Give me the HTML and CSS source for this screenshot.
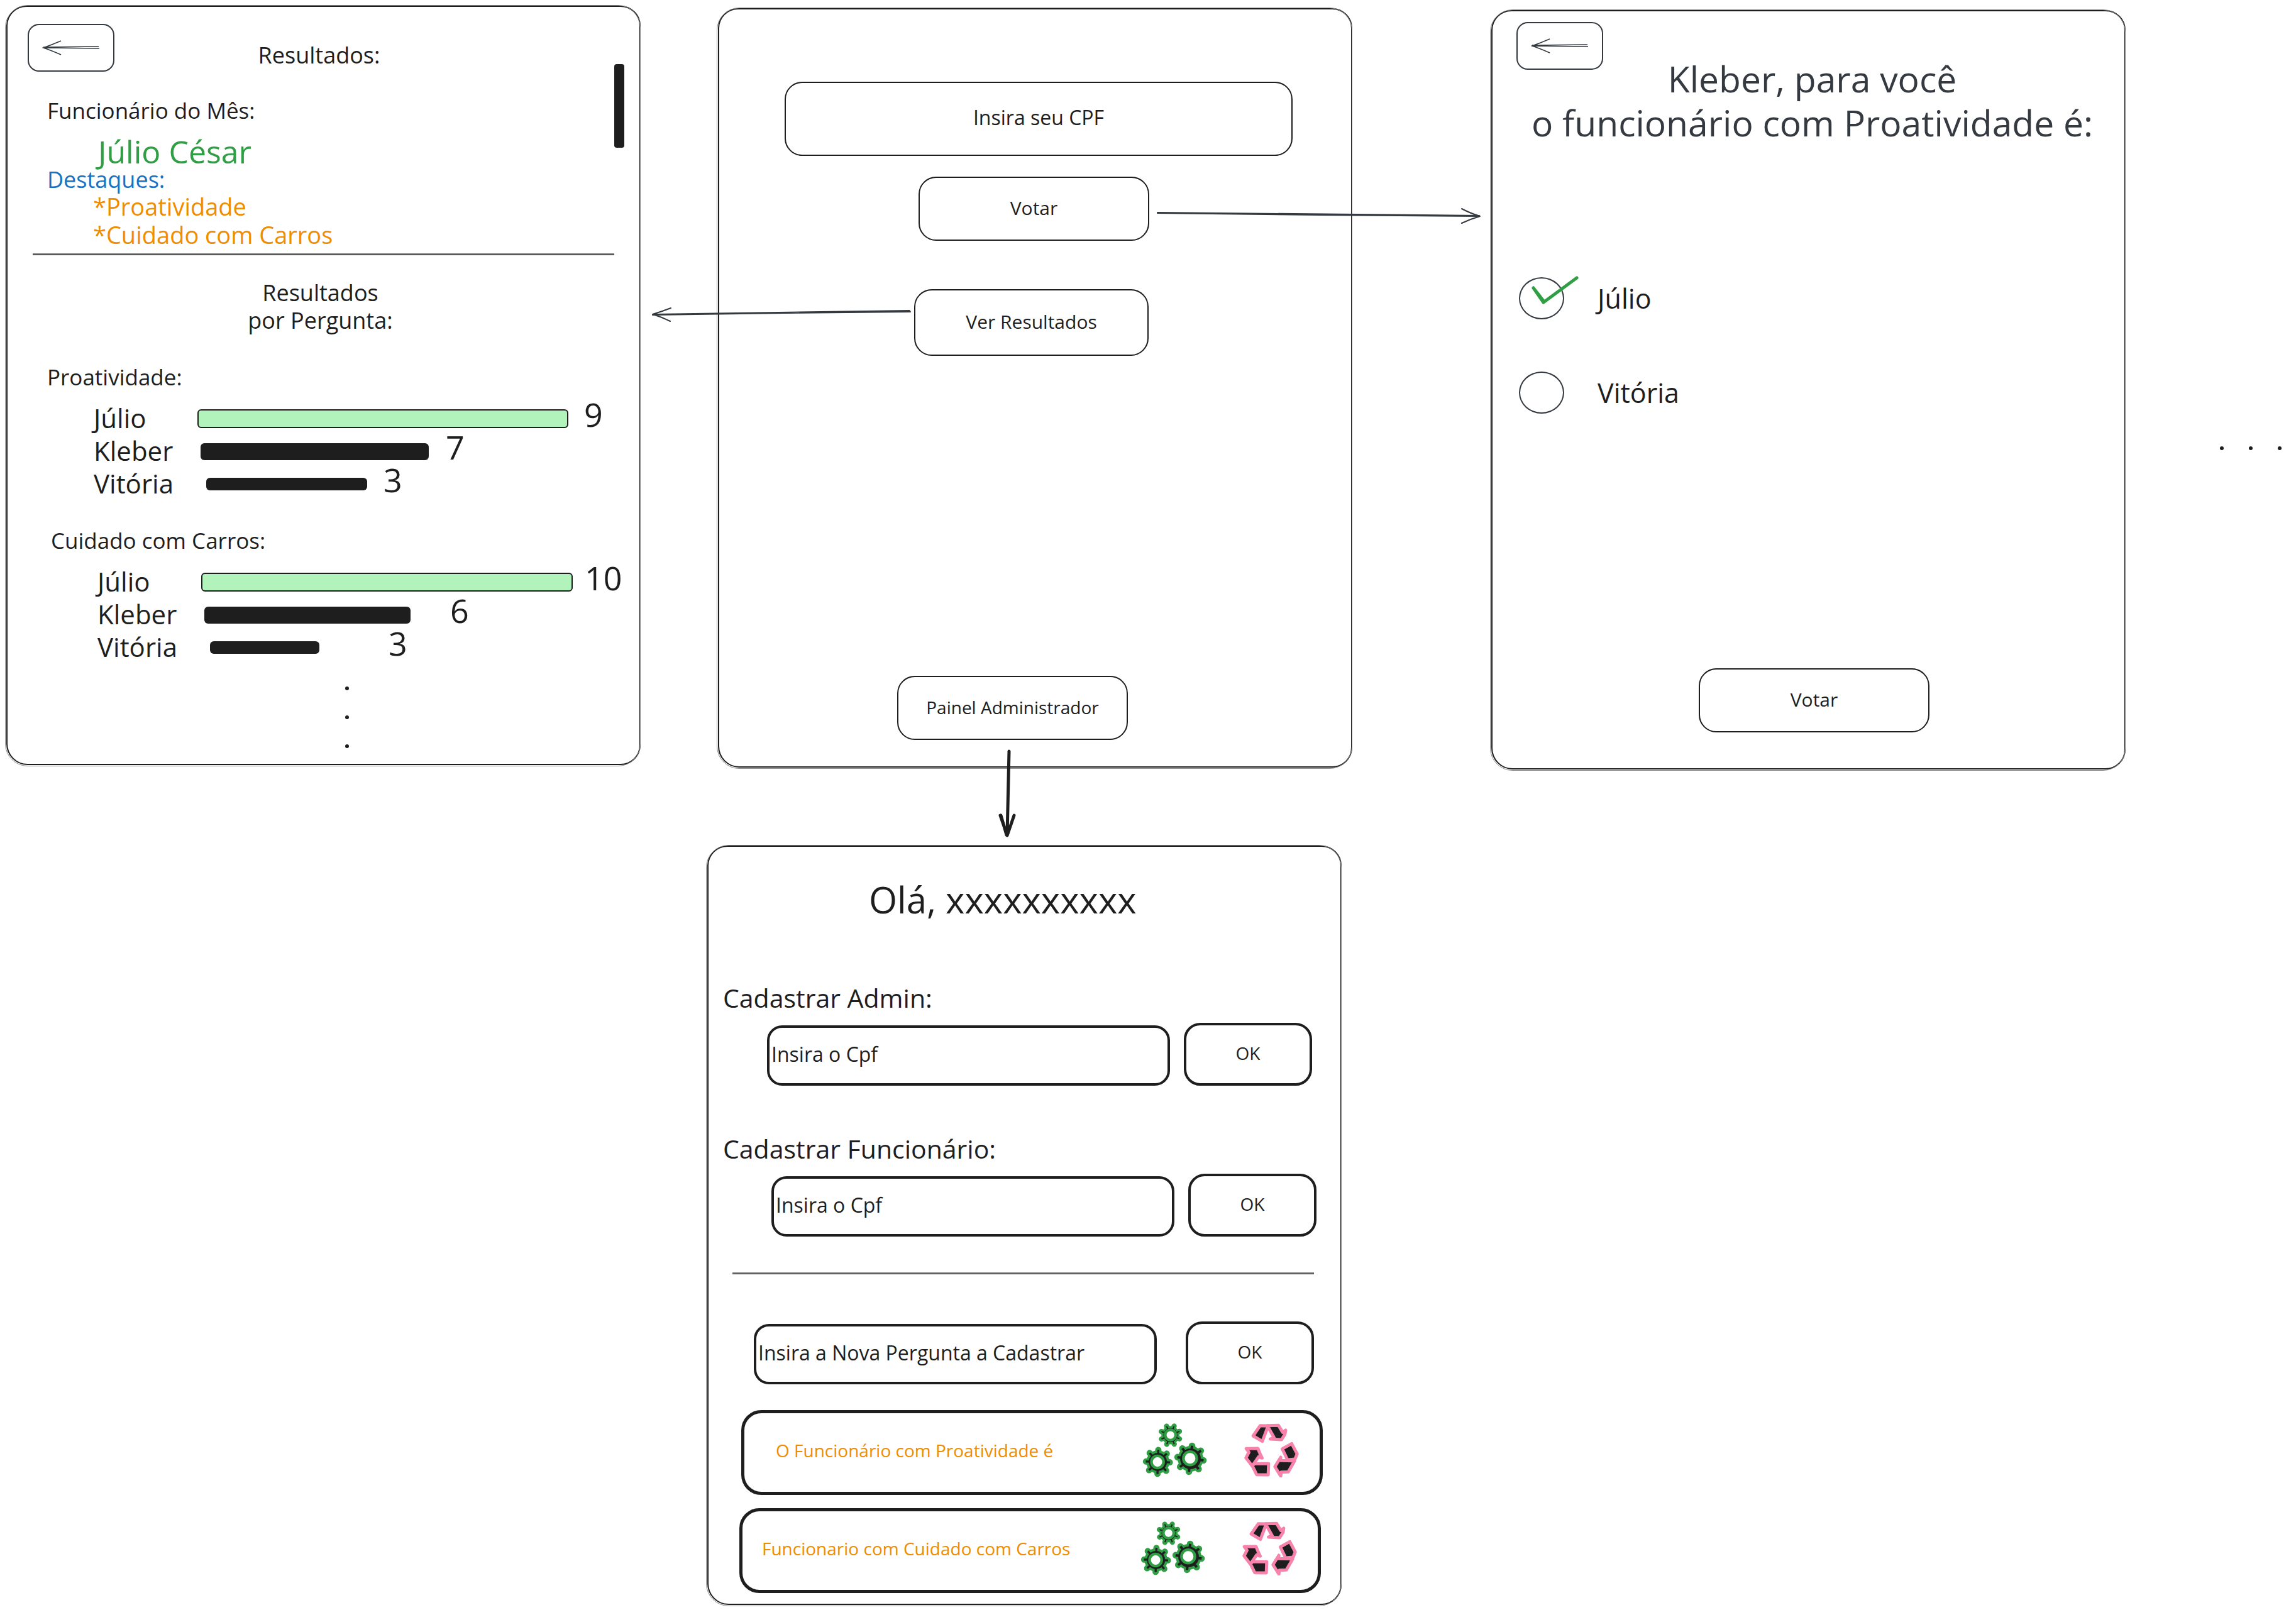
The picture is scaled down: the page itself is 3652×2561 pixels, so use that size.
FILE: index.html
```html
<!DOCTYPE html>
<html lang="pt-BR">
<head>
<meta charset="utf-8">
<meta name="viewport" content="width=device-width, initial-scale=1">
<title>Funcionário do Mês</title>
<link rel="stylesheet" href="styles.css">
</head>
<body>
<svg class="defs" aria-hidden="true">
  <symbol id="back" viewBox="0 0 92 26">
    <path d="M2 12 L90 11 M2 13 L91 14 M30 2 Q16 8 2 13 Q14 17 30 24"/>
  </symbol>
  <symbol id="gears" viewBox="50 64 312 268">
    <g class="gear-edge">
      <g transform="translate(184 127) rotate(22)"><circle r="43"/><path stroke-width="25" d="M0 -47V47M-47 0H47M-33 -33L33 33M-33 33L33 -33"/></g>
      <g transform="translate(124 255) rotate(2)"><circle r="55"/><path stroke-width="30" d="M0 -57V57M-57 0H57M-41 -41L41 41M-41 41L41 -41"/></g>
      <g transform="translate(280 240) rotate(7)"><circle r="61"/><path stroke-width="32" d="M0 -62V62M-62 0H62M-44 -44L44 44M-44 44L44 -44"/></g>
    </g>
    <g class="gear-body">
      <g transform="translate(184 127) rotate(22)"><circle r="33"/><path stroke-width="6" d="M0 -46V46M-46 0H46M-33 -33L33 33M-33 33L33 -33"/></g>
      <g transform="translate(124 255) rotate(2)"><circle r="43"/><path stroke-width="10" d="M0 -58V58M-58 0H58M-41 -41L41 41M-41 41L41 -41"/></g>
      <g transform="translate(280 240) rotate(7)"><circle r="49"/><path stroke-width="12" d="M0 -63V63M-63 0H63M-45 -45L45 45M-45 45L45 -45"/></g>
    </g>
    <g class="gear-hole">
      <circle cx="184" cy="126" r="25"/>
      <circle cx="122" cy="255" r="29"/>
      <circle cx="278" cy="238" r="32"/>
    </g>
  </symbol>
  <symbol id="recycle" viewBox="538 68 260 258">
    <path d="M614 79 L652 80 L624 154 L580 128 Z"/>
    <path d="M648 79 L701 78 L721 111 L735 101 L732 120 L716 146 L662 143 L680 136 Z"/>
    <path d="M547 189 L603 188 L613 213 L623 234 L606 228 L576 272 L546 233 L560 206 Z"/>
    <path d="M576 270 L588 261 L654 261 L652 314 L597 313 Z"/>
    <path d="M719 190 L764 165 L790 214 L780 239 L744 242 Z"/>
    <path d="M712 230 L710 246 L778 247 L748 300 L714 301 L712 320 L684 275 Z"/>
  </symbol>
</svg>

<main class="canvas">

  <section class="screen screen--results">
    <header class="results-head">
      <button class="back" type="button" aria-label="Voltar"><svg><use href="#back"/></svg></button>
      <h1 class="text results-title">Resultados:</h1>
    </header>
    <div class="scroll-thumb"></div>
    <h2 class="text text--label indent month">Funcionário do Mês:</h2>
    <p class="winner">Júlio César</p>
    <h3 class="text indent highlight-title">Destaques:</h3>
    <ul class="highlights">
      <li>*Proatividade</li>
      <li>*Cuidado com Carros</li>
    </ul>
    <hr class="rule rule--results">
    <h2 class="text by-question">Resultados<br>por Pergunta:</h2>

    <section class="chart">
      <h3 class="text text--label indent">Proatividade:</h3>
      <ul class="rows">
        <li class="row"><span class="name">Júlio</span><span class="track" style="width:615px"><span class="bar bar--first" style="width:590px"></span></span><span class="value">9</span></li>
        <li class="row"><span class="name">Kleber</span><span class="track" style="width:390px"><span class="bar" style="width:363px"></span></span><span class="value">7</span></li>
        <li class="row"><span class="name">Vitória</span><span class="track" style="width:282px"><span class="bar bar--thin" style="width:256px"></span></span><span class="value">3</span></li>
      </ul>
    </section>
    <section class="chart chart--inset">
      <h3 class="text text--label indent">Cuidado com Carros:</h3>
      <ul class="rows">
        <li class="row"><span class="name">Júlio</span><span class="track" style="width:610px"><span class="bar bar--first" style="width:591px"></span></span><span class="value">10</span></li>
        <li class="row"><span class="name">Kleber</span><span class="track" style="width:391px"><span class="bar" style="width:328px"></span></span><span class="value">6</span></li>
        <li class="row"><span class="name">Vitória</span><span class="track" style="width:284px"><span class="bar bar--thin" style="width:174px"></span></span><span class="value">3</span></li>
      </ul>
    </section>
    <div class="dots dots--column"><i></i><i></i><i></i></div>
  </section>

  <section class="screen screen--home">
    <input class="cpf" type="text" placeholder="Insira seu CPF" aria-label="Insira seu CPF">
    <button class="button button--vote" type="button">Votar</button>
    <button class="button button--see" type="button">Ver Resultados</button>
    <button class="button button--panel" type="button">Painel Administrador</button>
  </section>

  <section class="screen screen--vote">
    <button class="back" type="button" aria-label="Voltar"><svg><use href="#back"/></svg></button>
    <h1 class="question">Kleber, para você<br>o funcionário com Proatividade é:</h1>
    <div class="options">
      <label class="option">
        <input type="radio" name="voto" checked>
        <svg class="check" viewBox="0 0 76 48"><path d="M4 20 L20 43 L73 4 M4 20 Q13 31 21 42"/></svg>
        Júlio
      </label>
      <label class="option"><input type="radio" name="voto">Vitória</label>
    </div>
    <button class="button button--send" type="button">Votar</button>
  </section>

  <section class="screen screen--admin">
    <h1 class="hello">Olá, xxxxxxxxxx</h1>
    <label class="field-label" for="admin">Cadastrar Admin:</label>
    <div class="field field--admin">
      <input class="entry" id="admin" type="text" placeholder="Insira o Cpf">
      <button class="ok" type="button">OK</button>
    </div>
    <label class="field-label field-label--second" for="employee">Cadastrar Funcionário:</label>
    <div class="field field--employee">
      <input class="entry" id="employee" type="text" placeholder="Insira o Cpf">
      <button class="ok" type="button">OK</button>
    </div>
    <hr class="rule rule--admin">
    <div class="field field--question">
      <input class="entry" type="text" placeholder="Insira a Nova Pergunta a Cadastrar" aria-label="Insira a Nova Pergunta a Cadastrar">
      <button class="ok" type="button">OK</button>
    </div>
    <article class="card card--first">
      <p>O Funcionário com Proatividade é</p>
      <button class="icon icon--gears" type="button" aria-label="Editar"><svg><use href="#gears"/></svg></button>
      <button class="icon icon--recycle" type="button" aria-label="Remover"><svg><use href="#recycle"/></svg></button>
    </article>
    <article class="card card--second">
      <p>Funcionario com Cuidado com Carros</p>
      <button class="icon icon--gears" type="button" aria-label="Editar"><svg><use href="#gears"/></svg></button>
      <button class="icon icon--recycle" type="button" aria-label="Remover"><svg><use href="#recycle"/></svg></button>
    </article>
  </section>

  <svg class="arrow arrow--vote" viewBox="0 0 516 28" aria-hidden="true"><path d="M1 8 L513 13 M1 9 L260 12 L513 14 M485 2 Q498 9 514 14 Q500 18 485 25"/></svg>
  <svg class="arrow arrow--results" viewBox="0 0 414 32" aria-hidden="true"><path d="M411 11 L2 17 M412 13 L210 15 L2 18 M31 7 Q18 12 2 17 Q16 21 30 28"/></svg>
  <svg class="arrow arrow--panel" viewBox="0 0 30 144" aria-hidden="true"><path d="M18 5 L15 139 M4 107 L15 139 L26 107 M5 107 L14 138"/></svg>
  <div class="dots dots--row"><i></i><i></i><i></i></div>
</main>
</body>
</html>
```

FILE: styles.css
```css
:root {
  --ink: #1e1e1e;
  --slate: #343a40;
  --green: #2f9e44;
  --blue: #1971c2;
  --orange: #f08c00;
  --pink: #f783ac;
}

* { box-sizing: border-box; }

body {
  margin: 0;
  background: #fff;
  color: var(--ink);
  font-family: Excalifont, Virgil, "Open Sans", sans-serif;
}

h1, h2, h3, p, ul { margin: 0; padding: 0; font-weight: 400; }
ul { list-style: none; }
button, input { font: inherit; color: inherit; background: transparent; margin: 0; padding: 0; }
input::placeholder { color: inherit; opacity: 1; }
.defs { position: absolute; width: 0; height: 0; }

.canvas { position: relative; min-height: 2560px; overflow: hidden; }

/* Screens are pinned on the board */
.screen {
  position: absolute;
  display: flex;
  flex-direction: column;
  align-items: flex-start;
  width: 1009px;
  min-height: 1208px;
  border: 2px solid var(--ink);
  border-radius: 32px 32px 32px 34px;
}
.screen::after {
  content: "";
  position: absolute;
  inset: -3px -2px -4px -4px;
  border: 1px solid #8a8a8a;
  border-radius: 36px;
  pointer-events: none;
}
.screen--results { left: 10px; top: 9px; }
.screen--home { left: 1142px; top: 13px; padding-bottom: 42px; }
.screen--vote { left: 2372px; top: 16px; padding-bottom: 57px; }
.screen--admin { left: 1125px; top: 1345px; }

.text { font-size: 36px; line-height: 44px; }
.text--label { font-size: 35px; }
.indent { margin-left: 63px; }

.rule { border: 0; height: 3px; margin: 0; background: #777; border-bottom: 1px solid var(--ink); }

/* Buttons */
.button {
  width: 367px;
  height: 102px;
  padding-bottom: 2px;
  border: 2px solid var(--ink);
  border-radius: 28px;
  font-size: 30px;
  line-height: 36px;
}
.back {
  display: flex;
  align-items: center;
  justify-content: center;
  width: 138px;
  height: 76px;
  border: 2px solid var(--slate);
  border-radius: 18px;
}
.back svg { width: 92px; height: 26px; fill: none; stroke: var(--slate); stroke-width: 1.6; }

/* Results */
.results-head {
  display: grid;
  grid-template-columns: 138px 1fr 152px;
  align-self: stretch;
  padding: 27px 32px 0;
}
.results-title { text-align: center; padding-top: 28px; }
.scroll-thumb {
  position: absolute;
  right: 24px;
  top: 91px;
  width: 16px;
  height: 133px;
  border-radius: 4px;
  background: var(--ink);
}
.month { margin-top: 40px; }
.winner { margin: 18px 0 0 144px; font-size: 50px; line-height: 50px; color: var(--green); }
.highlight-title { color: var(--blue); line-height: 40px; }
.highlights { margin-left: 136px; font-size: 38px; line-height: 45px; color: var(--orange); }
.rule--results { width: 925px; margin: 7px 0 38px 40px; }
.by-question { align-self: stretch; text-align: center; padding-right: 10px; }

.chart { margin-top: 46px; }
.chart--inset { margin: 42px 0 0 6px; }
.rows { margin: 18px 0 0 137px; }
.row { display: flex; align-items: center; height: 52px; }
.row:nth-child(2) .track { margin-left: 5px; }
.row:nth-child(3) .track { margin-left: 14px; }
.name { width: 165px; padding-bottom: 2px; font-size: 42px; line-height: 44px; }
.track { display: block; }
.bar { display: block; height: 27px; border-radius: 6px; background: var(--ink); }
.bar--first { height: 30px; background: #b2f2bb; border: 2px solid var(--ink); }
.bar--thin { height: 20px; }
.value { padding-bottom: 14px; font-size: 52px; line-height: 40px; }

.dots { display: flex; gap: 40px; }
.dots i { width: 6px; height: 6px; border-radius: 50%; background: var(--ink); }
.dots--column { flex-direction: column; margin: 36px 0 0 537px; }
.dots--row { position: absolute; left: 3531px; top: 710px; }

/* Home */
.cpf {
  width: 808px;
  height: 118px;
  margin: 115px 0 0 104px;
  padding-bottom: 6px;
  border: 2px solid var(--ink);
  border-radius: 28px;
  font-size: 32px;
  text-align: center;
}
.button--vote { margin: 33px 0 0 317px; }
.button--see { width: 373px; height: 106px; margin: 77px 0 0 310px; }
.button--panel { margin: auto 0 0 283px; font-size: 28px; }

/* Vote */
.screen--vote .back { margin: 17px 0 0 38px; }
.question {
  align-self: stretch;
  margin-top: -21px;
  padding-left: 12px;
  font-size: 57px;
  line-height: 70px;
  text-align: center;
  white-space: nowrap;
  color: var(--slate);
}
.options { display: flex; flex-direction: column; gap: 83px; margin: 211px 0 0 42px; }
.option { position: relative; display: flex; align-items: center; font-size: 43px; line-height: 50px; }
.option input {
  appearance: none;
  width: 72px;
  height: 67px;
  margin-right: 53px;
  border: 2px solid var(--slate);
  border-radius: 50%;
}
.check { position: absolute; left: 19px; top: -3px; width: 76px; height: 48px; fill: none; stroke: var(--green); stroke-width: 5; stroke-linecap: round; stroke-linejoin: round; }
.button--send { margin: auto 0 0 328px; }

/* Admin */
.hello { margin: 46px 0 0 255px; font-size: 58px; line-height: 75px; }
.field-label { margin: 94px 0 0 23px; font-size: 41px; line-height: 50px; }
.field-label--second { margin-top: 75px; }
.field { display: flex; align-items: flex-end; gap: 22px; margin-top: 15px; }
.field--admin { margin-left: 93px; }
.field--employee { margin-left: 100px; }
.field--question { margin: 75px 0 0 72px; gap: 46px; }
.entry { width: 641px; height: 96px; padding: 0 3px 5px; border: 4px solid var(--ink); border-radius: 24px; font-size: 32px; }
.ok { width: 204px; height: 100px; padding-bottom: 4px; border: 4px solid var(--ink); border-radius: 26px; font-size: 28px; }
.rule--admin { width: 925px; margin: 57px 0 0 38px; }
.card {
  display: flex;
  align-items: center;
  width: 925px;
  height: 135px;
  padding: 0 33px 8px 50px;
  border: 5px solid var(--ink);
  border-radius: 32px;
  font-size: 28px;
  color: var(--orange);
}
.card--first { margin: 41px 0 0 52px; }
.card--second { margin: 21px 0 0 49px; padding-left: 31px; }
.icon { display: flex; border: 0; }
.icon--gears { margin-left: auto; }
.icon--gears svg { width: 104px; height: 89px; }
.icon--recycle { margin-left: 58px; }
.icon--recycle svg { width: 87px; height: 86px; overflow: visible; fill: var(--ink); stroke: var(--pink); stroke-width: 15; stroke-linejoin: round; }
.gear-edge { fill: var(--green); stroke: var(--green); stroke-linecap: round; }
.gear-body { fill: var(--ink); stroke: var(--ink); }
.gear-hole { fill: #fff; stroke: var(--green); stroke-width: 13; }

/* Arrows between screens */
.arrow { position: absolute; fill: none; stroke: var(--slate); stroke-width: 2; stroke-linecap: round; stroke-linejoin: round; }
.arrow--vote { left: 1840px; top: 330px; width: 516px; height: 28px; }
.arrow--results { left: 1036px; top: 483px; width: 414px; height: 32px; }
.arrow--panel { left: 1587px; top: 1190px; width: 30px; height: 144px; stroke: var(--ink); stroke-width: 5; }
```
